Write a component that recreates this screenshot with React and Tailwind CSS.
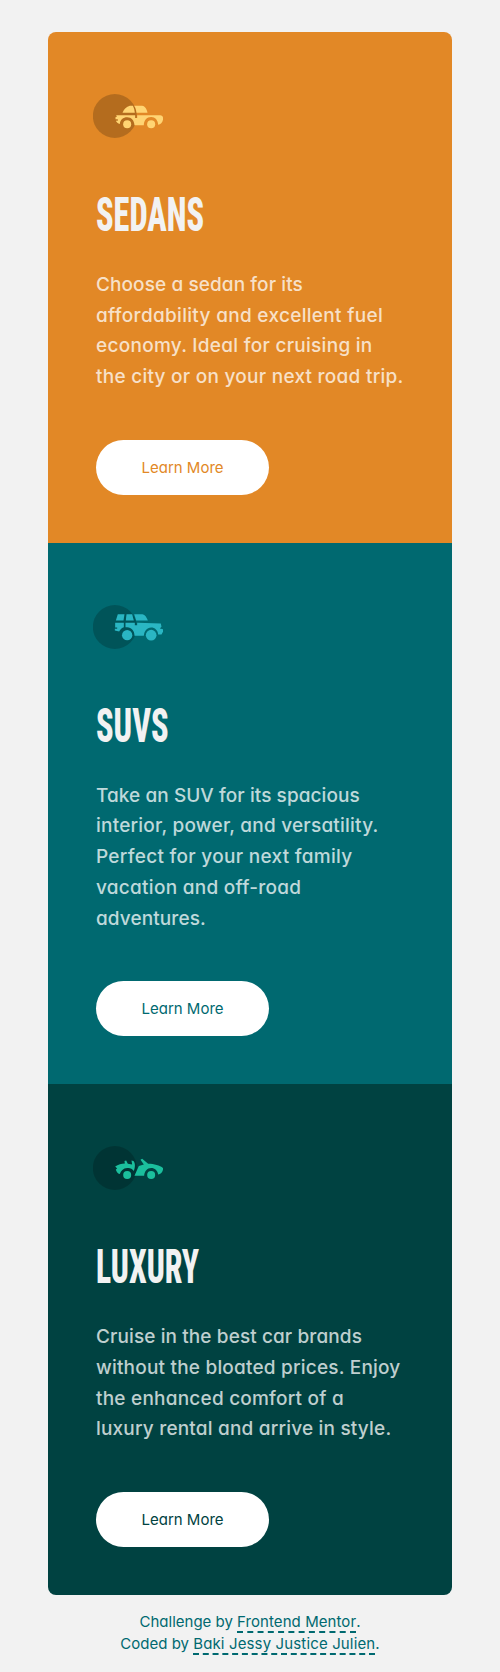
function SedanIcon() {
  return (
    <svg viewBox="38.5 27 211.2 132" className="h-11 w-[70.4px]" aria-hidden="true">
      <circle cx="104" cy="93" r="66" fill="#000" fillOpacity=".2" />
      <g fill="#FFD473">
        <path d="M127 83C131 74 139 65 149 62.5H158C161 68 163 75 164 83Z" />
        <path d="M162 62.500H186C193 63 200 72 202 83H169C168 75 166 68 162 62.500Z" />
        <path d="M107 91H165V99H171V91H240C247 92 249 96 249 101C248 111 242 118 234 119C233 105 225 96 213 96C200 96 191 106 191 121H163C162 106 154 97 141 97C129 97 120 105 119 117C113 116 109 111 107 107H113V103H106V97L111 94Z" />
        <circle cx="141" cy="118" r="12" />
        <circle cx="213" cy="118" r="12" />
      </g>
    </svg>
  );
}

function SuvIcon() {
  return (
    <svg viewBox="38.500 29.500 211.200 132" className="h-11 w-[70.4px]" aria-hidden="true">
      <circle cx="104" cy="95.500" r="66" fill="#000" fillOpacity=".2" />
      <g fill="#2AB6C3">
        <path d="M113 57H133L130 76H107Z" />
        <path d="M139 57H156L161 76H137Z" />
        <path d="M162 57H187C195 59 200 67 203 76H168Z" />
        <path d="M105 83H131V96C123 98 119 105 117 109L104 106V101H111V97H105Z" />
        <path d="M136 83H164V90H171V83L242 85L244 95L239 100L249 102V109L244 118H234C233 105 224 97 213 97C200 97 192 108 191 122H163C163 106 154 97 141 96H136Z" />
        <circle cx="141" cy="120" r="15.500" />
        <circle cx="213" cy="120" r="16" />
      </g>
    </svg>
  );
}

function LuxuryIcon() {
  return (
    <svg viewBox="38.500 30.700 211.200 132" className="h-11 w-[70.4px]" aria-hidden="true">
      <circle cx="104" cy="96.700" r="66" fill="#000" fillOpacity=".2" />
      <g fill="#1BBF9D">
        <path d="M105 92C114 86 124 83 134 83L133 76L138 74L143 84L156 86L154 74L160 76C166 83 165 95 161 106C156 98 149 96 141 97C129 98 122 105 119 115C112 113 108 106 107 101L111 98Z" />
        <path d="M181 72L186 69L204 84C222 84 240 89 249 97C249 107 243 115 234 116C232 105 224 97 213 97C201 97 193 107 192 120H163L176 91L191 86Z" />
        <circle cx="141" cy="118" r="12" />
        <circle cx="213" cy="118" r="12" />
      </g>
    </svg>
  );
}

const cards = [
  {
    title: 'SEDANS',
    titleScale: 'scale-x-[.66]',
    Icon: SedanIcon,
    background: 'bg-[#E28826]',
    buttonText: 'text-[#E28826]',
    lines: [
      ['Choose a sedan for its', 'tracking-[.09px]'],
      ['affordability and excellent fuel', 'tracking-[.31px]'],
      ['economy. Ideal for cruising in', 'tracking-[.28px]'],
      ['the city or on your next road trip.', 'tracking-[.26px]'],
    ],
  },
  {
    title: 'SUVS',
    titleScale: 'scale-x-[.66]',
    Icon: SuvIcon,
    background: 'bg-[#006970]',
    buttonText: 'text-[#006970]',
    lines: [
      ['Take an SUV for its spacious', 'tracking-[.07px]'],
      ['interior, power, and versatility.', 'tracking-[.22px]'],
      ['Perfect for your next family', 'tracking-[.29px]'],
      ['vacation and off-road', 'tracking-[.27px]'],
      ['adventures.', 'tracking-[.10px]'],
    ],
  },
  {
    title: 'LUXURY',
    titleScale: 'scale-x-[.645]',
    Icon: LuxuryIcon,
    background: 'bg-[#004241]',
    buttonText: 'text-[#004241]',
    lines: [
      ['Cruise in the best car brands', 'tracking-[.10px]'],
      ['without the bloated prices. Enjoy', 'tracking-[.20px]'],
      ['the enhanced comfort of a', 'tracking-[.22px]'],
      ['luxury rental and arrive in style.', 'tracking-[.19px]'],
    ],
  },
];

function Card({ title, titleScale, Icon, background, buttonText, lines }) {
  return (
    <section className={`flex flex-col items-start p-12 ${background}`}>
      <div className="-ml-[3.2px] mt-[14px]">
        <Icon />
      </div>
      <h2
        className={`mt-[53px] h-12 origin-left font-['Roboto',sans-serif] text-[49px] leading-[48px] font-extrabold font-stretch-[75%] text-[#F2F2F2] ${titleScale}`}
      >
        {title}
      </h2>
      <p className="mt-[30.88px] text-[19px] leading-[30.72px] font-medium text-white/75">
        {lines.map(([text, tracking]) => (
          <span key={text} className={`block whitespace-nowrap ${tracking}`}>
            {text}
          </span>
        ))}
      </p>
      <button className={`mt-[47px] h-[55px] w-[173px] rounded-full bg-white pt-0.5 text-[15px] ${buttonText}`}>
        Learn More
      </button>
    </section>
  );
}

export default function App() {
  return (
    <div className="min-h-[1672px] bg-[#F2F2F2] px-12 pt-8 font-['Inter',sans-serif] [font-feature-settings:'cv11']">
      <main className="w-[404px] overflow-hidden rounded-lg">
        {cards.map((card) => (
          <Card key={card.title} {...card} />
        ))}
      </main>
      <footer className="mt-4 text-center text-[15px] leading-[22.4px] text-[#006970]">
        <p>
          Challenge by{' '}
          <a className="border-b-2 border-dashed border-[#006970] tracking-[.07px]">Frontend Mentor</a>.
        </p>
        <p>
          Coded by{' '}
          <a className="border-b-2 border-dashed border-[#006970] tracking-[.14px]">Baki Jessy Justice Julien</a>.
        </p>
      </footer>
    </div>
  );
}
